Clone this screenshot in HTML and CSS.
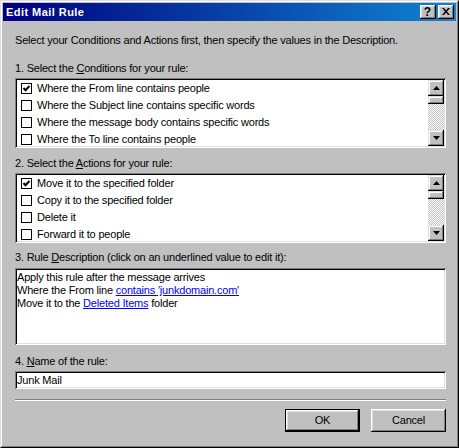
FILE: index.html
```html
<!DOCTYPE html>
<html lang="en">
<head>
<meta charset="utf-8">
<title>Edit Mail Rule</title>
<link rel="stylesheet" href="styles.css">
</head>
<body>
<div class="window">
  <div class="frame">
    <div class="titlebar">
      <span class="title">Edit Mail Rule</span>
      <div class="tb-buttons">
        <div class="tb-btn help">?</div>
        <div class="tb-btn close">
          <svg width="8" height="7" viewBox="0 0 8 7"><path d="M0 0h2l2 2.5L6 0h2L5 3.5 8 7H6L4 4.5 2 7H0l3-3.5z" fill="#000"/></svg>
        </div>
      </div>
    </div>
    <div class="content">
      <p class="intro">Select your Conditions and Actions first, then specify the values in the Description.</p>

      <div class="label l1">1. Select the <u>C</u>onditions for your rule:</div>
      <div class="listbox">
        <div class="rows">
          <div class="row"><span class="cb"><svg width="9" height="9" viewBox="0 0 9 9"><path d="M1.5 4l2 2.2 4-4.2" fill="none" stroke="#000" stroke-width="2"/></svg></span>Where the From line contains people</div>
          <div class="row"><span class="cb"></span>Where the Subject line contains specific words</div>
          <div class="row"><span class="cb"></span>Where the message body contains specific words</div>
          <div class="row last"><span class="cb"></span>Where the To line contains people</div>
        </div>
        <div class="vscroll">
          <div class="sb-btn"><svg width="7" height="4" viewBox="0 0 7 4"><path d="M3.5 0L7 4H0z" fill="#000"/></svg></div>
          <div class="thumb"></div>
          <div class="track"></div>
          <div class="sb-btn"><svg width="7" height="4" viewBox="0 0 7 4"><path d="M0 0h7L3.5 4z" fill="#000"/></svg></div>
        </div>
      </div>

      <div class="label l2">2. Select the <u>A</u>ctions for your rule:</div>
      <div class="listbox">
        <div class="rows">
          <div class="row"><span class="cb"><svg width="9" height="9" viewBox="0 0 9 9"><path d="M1.5 4l2 2.2 4-4.2" fill="none" stroke="#000" stroke-width="2"/></svg></span>Move it to the specified folder</div>
          <div class="row"><span class="cb"></span>Copy it to the specified folder</div>
          <div class="row"><span class="cb"></span>Delete it</div>
          <div class="row last"><span class="cb"></span>Forward it to people</div>
        </div>
        <div class="vscroll">
          <div class="sb-btn"><svg width="7" height="4" viewBox="0 0 7 4"><path d="M3.5 0L7 4H0z" fill="#000"/></svg></div>
          <div class="thumb"></div>
          <div class="track"></div>
          <div class="sb-btn"><svg width="7" height="4" viewBox="0 0 7 4"><path d="M0 0h7L3.5 4z" fill="#000"/></svg></div>
        </div>
      </div>

      <div class="label l3">3. Rule <u>D</u>escription (click on an underlined value to edit it):</div>
      <div class="desc">
        <div class="desc-inner">
          <div>Apply this rule after the message arrives</div>
          <div>Where the From line <a href="#">contains 'junkdomain.com'</a></div>
          <div>Move it to the <a href="#">Deleted Items</a> folder</div>
        </div>
      </div>

      <div class="label l4">4. <u>N</u>ame of the rule:</div>
      <div class="textbox"><div class="textbox-inner">Junk Mail</div></div>

      <div class="separator"></div>

      <div class="buttons">
        <div class="btn default"><span class="btn-face">OK</span></div>
        <div class="btn"><span class="btn-face">Cancel</span></div>
      </div>
    </div>
  </div>
</div>
</body>
</html>
```
FILE: styles.css
```css
* {
  box-sizing: border-box;
  margin: 0;
  padding: 0;
}

html, body {
  width: 459px;
  height: 448px;
  overflow: hidden;
  background: #c0c0c0;
}

body {
  font-family: "Liberation Sans", Arial, sans-serif;
  font-size: 11px;
  line-height: 13px;
  letter-spacing: -0.2px;
  color: #000;
}

.window {
  width: 459px;
  height: 448px;
  border: 1px solid;
  border-color: #dfdfdf #000 #000 #dfdfdf;
}

.frame {
  height: 100%;
  border: 1px solid;
  border-color: #fff #808080 #808080 #fff;
  padding: 1px;
  background: #c0c0c0;
  display: flex;
  flex-direction: column;
}

.titlebar {
  height: 18px;
  flex: none;
  background: linear-gradient(to right, #000080, #1084d0);
  display: flex;
  align-items: center;
  justify-content: space-between;
  padding: 0 2px 0 3px;
}

.title {
  color: #fff;
  font-weight: bold;
  letter-spacing: 0.45px;
  line-height: 18px;
}

.tb-buttons {
  display: flex;
  gap: 2px;
}

.tb-btn {
  width: 16px;
  height: 14px;
  background: #c0c0c0;
  box-shadow: inset -1px -1px #000, inset 1px 1px #fff, inset -2px -2px #808080, inset 2px 2px #dfdfdf;
  display: flex;
  align-items: center;
  justify-content: center;
}

.help {
  font-weight: bold;
  font-size: 12px;
  line-height: 14px;
  letter-spacing: 0;
  padding-right: 1px;
}

.close svg {
  display: block;
  margin-top: -1px;
}

.content {
  padding: 13px 10px 0 12px;
  display: flex;
  flex-direction: column;
}

.intro {
  line-height: 13px;
}

.label {
  line-height: 13px;
  margin-bottom: 3px;
}

.l1 { margin-top: 15px; }
.l2 { margin-top: 9px; }
.l3 { margin-top: 8px; margin-bottom: 4px; }
.l4 { margin-top: 10px; }

.listbox,
.desc,
.textbox {
  padding: 2px;
  background: #fff;
  box-shadow: inset 1px 1px #808080, inset -1px -1px #fff, inset 2px 2px #000, inset -2px -2px #dfdfdf;
}

.listbox {
  height: 70px;
  display: flex;
}

.rows {
  flex: 1;
  overflow: hidden;
  background: #fff;
}

.row {
  height: 17px;
  line-height: 17px;
  display: flex;
  align-items: center;
  white-space: nowrap;
}

.row.last {
  height: 15px;
  line-height: 15px;
  align-items: flex-start;
  padding-top: 3px;
}

.row.last {
  line-height: 11px;
}

.cb {
  width: 11px;
  height: 11px;
  border: 1px solid #000;
  background: #fff;
  margin: 0 5px 0 4px;
  flex: none;
  display: flex;
}

.cb svg {
  display: block;
}

.vscroll {
  width: 16px;
  flex: none;
  display: flex;
  flex-direction: column;
}

.sb-btn,
.thumb {
  background: #c0c0c0;
  box-shadow: inset -1px -1px #000, inset 1px 1px #dfdfdf, inset -2px -2px #808080, inset 2px 2px #fff;
}

.sb-btn {
  height: 16px;
  flex: none;
  display: flex;
  align-items: center;
  justify-content: center;
}

.thumb {
  height: 8px;
  flex: none;
}

.track {
  flex: 1;
  background: repeating-conic-gradient(#fff 0 25%, #c0c0c0 0 50%) 0 0 / 2px 2px;
}

.desc {
  height: 77px;
}

.desc-inner {
  padding-top: 1px;
  line-height: 13px;
  white-space: nowrap;
}

.desc a {
  color: #0000ff;
  text-decoration: underline;
}

.textbox {
  height: 18px;
}

.textbox-inner {
  line-height: 14px;
}

.separator {
  margin-top: 10px;
  height: 2px;
  border-top: 1px solid #808080;
  border-bottom: 1px solid #fff;
}

.buttons {
  margin-top: 8px;
  display: flex;
  justify-content: flex-end;
  gap: 11px;
}

.btn {
  width: 75px;
  height: 23px;
  display: flex;
}

.btn-face {
  flex: 1;
  background: #c0c0c0;
  box-shadow: inset -1px -1px #000, inset 1px 1px #fff, inset -2px -2px #808080, inset 2px 2px #dfdfdf;
  display: flex;
  align-items: center;
  justify-content: center;
  line-height: 13px;
}

.btn.default {
  border: 1px solid #000;
}
```
